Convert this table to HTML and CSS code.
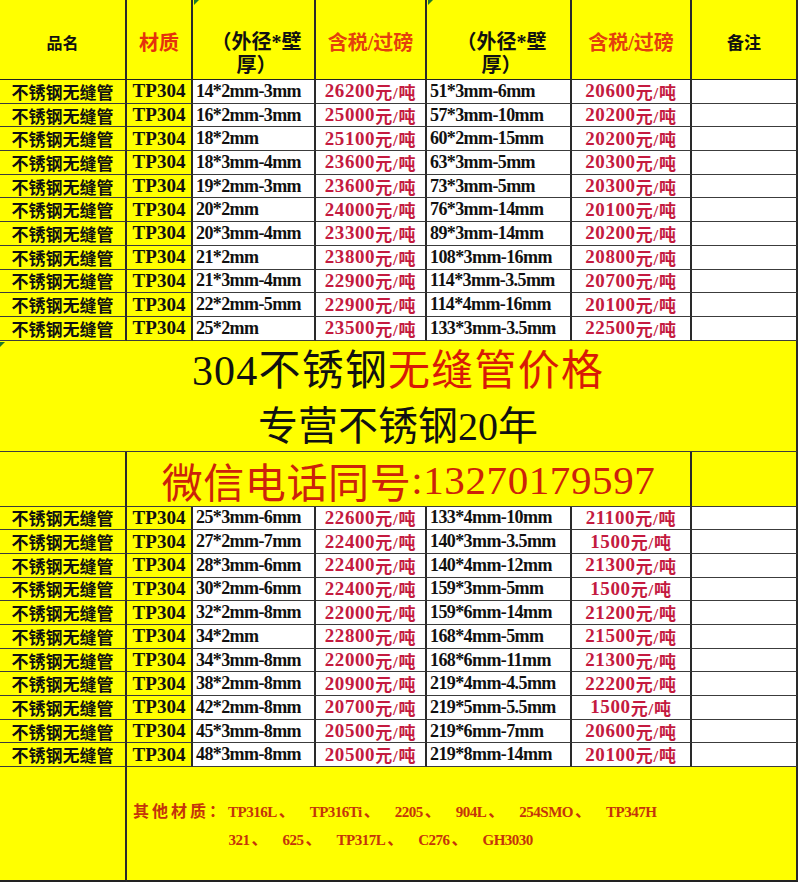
FILE: index.html
```html
<!DOCTYPE html>
<html lang="zh-CN">
<head>
<meta charset="utf-8">
<title>304不锈钢无缝管价格</title>
<link rel="stylesheet" href="styles.css">
</head>
<body>
<div class="sheet">
  <div class="c y hd"><span class="h-name">品名</span></div>
  <div class="c y hd"><span class="h-red">材质</span></div>
  <div class="c y hd wrap"><span class="h-wrap">（外径*壁<br>厚）</span></div>
  <div class="c y hd"><span class="h-orange">含税/过磅</span></div>
  <div class="c y hd wrap"><span class="h-wrap">（外径*壁<br>厚）</span></div>
  <div class="c y hd"><span class="h-orange">含税/过磅</span></div>
  <div class="c y hd"><span class="h-note">备注</span></div>

  <div class="c y name">不锈钢无缝管</div><div class="c y mat">TP304</div><div class="c spec">14*2mm-3mm</div><div class="c price">26200<span class="u">元/吨</span></div><div class="c spec">51*3mm-6mm</div><div class="c price">20600<span class="u">元/吨</span></div><div class="c"></div>
  <div class="c y name">不锈钢无缝管</div><div class="c y mat">TP304</div><div class="c spec">16*2mm-3mm</div><div class="c price">25000<span class="u">元/吨</span></div><div class="c spec">57*3mm-10mm</div><div class="c price">20200<span class="u">元/吨</span></div><div class="c"></div>
  <div class="c y name">不锈钢无缝管</div><div class="c y mat">TP304</div><div class="c spec">18*2mm</div><div class="c price">25100<span class="u">元/吨</span></div><div class="c spec">60*2mm-15mm</div><div class="c price">20200<span class="u">元/吨</span></div><div class="c"></div>
  <div class="c y name">不锈钢无缝管</div><div class="c y mat">TP304</div><div class="c spec">18*3mm-4mm</div><div class="c price">23600<span class="u">元/吨</span></div><div class="c spec">63*3mm-5mm</div><div class="c price">20300<span class="u">元/吨</span></div><div class="c"></div>
  <div class="c y name">不锈钢无缝管</div><div class="c y mat">TP304</div><div class="c spec">19*2mm-3mm</div><div class="c price">23600<span class="u">元/吨</span></div><div class="c spec">73*3mm-5mm</div><div class="c price">20300<span class="u">元/吨</span></div><div class="c"></div>
  <div class="c y name">不锈钢无缝管</div><div class="c y mat">TP304</div><div class="c spec">20*2mm</div><div class="c price">24000<span class="u">元/吨</span></div><div class="c spec">76*3mm-14mm</div><div class="c price">20100<span class="u">元/吨</span></div><div class="c"></div>
  <div class="c y name">不锈钢无缝管</div><div class="c y mat">TP304</div><div class="c spec">20*3mm-4mm</div><div class="c price">23300<span class="u">元/吨</span></div><div class="c spec">89*3mm-14mm</div><div class="c price">20200<span class="u">元/吨</span></div><div class="c"></div>
  <div class="c y name">不锈钢无缝管</div><div class="c y mat">TP304</div><div class="c spec">21*2mm</div><div class="c price">23800<span class="u">元/吨</span></div><div class="c spec">108*3mm-16mm</div><div class="c price">20800<span class="u">元/吨</span></div><div class="c"></div>
  <div class="c y name">不锈钢无缝管</div><div class="c y mat">TP304</div><div class="c spec">21*3mm-4mm</div><div class="c price">22900<span class="u">元/吨</span></div><div class="c spec">114*3mm-3.5mm</div><div class="c price">20700<span class="u">元/吨</span></div><div class="c"></div>
  <div class="c y name">不锈钢无缝管</div><div class="c y mat">TP304</div><div class="c spec">22*2mm-5mm</div><div class="c price">22900<span class="u">元/吨</span></div><div class="c spec">114*4mm-16mm</div><div class="c price">20100<span class="u">元/吨</span></div><div class="c"></div>
  <div class="c y name">不锈钢无缝管</div><div class="c y mat">TP304</div><div class="c spec">25*2mm</div><div class="c price">23500<span class="u">元/吨</span></div><div class="c spec">133*3mm-3.5mm</div><div class="c price">22500<span class="u">元/吨</span></div><div class="c"></div>

  <div class="c y banner">
    <div class="b1"><span class="num">304</span>不锈钢<span class="red">无缝管价格</span></div>
    <div class="b2">专营不锈钢<span class="num">20</span>年</div>
  </div>

  <div class="c y"></div>
  <div class="c y phone"><span>微信电话同号</span><span class="num">:13270179597</span></div>
  <div class="c y"></div>

  <div class="c y name">不锈钢无缝管</div><div class="c y mat">TP304</div><div class="c spec">25*3mm-6mm</div><div class="c price">22600<span class="u">元/吨</span></div><div class="c spec">133*4mm-10mm</div><div class="c price">21100<span class="u">元/吨</span></div><div class="c"></div>
  <div class="c y name">不锈钢无缝管</div><div class="c y mat">TP304</div><div class="c spec">27*2mm-7mm</div><div class="c price">22400<span class="u">元/吨</span></div><div class="c spec">140*3mm-3.5mm</div><div class="c price">1500<span class="u">元/吨</span></div><div class="c"></div>
  <div class="c y name">不锈钢无缝管</div><div class="c y mat">TP304</div><div class="c spec">28*3mm-6mm</div><div class="c price">22400<span class="u">元/吨</span></div><div class="c spec">140*4mm-12mm</div><div class="c price">21300<span class="u">元/吨</span></div><div class="c"></div>
  <div class="c y name">不锈钢无缝管</div><div class="c y mat">TP304</div><div class="c spec">30*2mm-6mm</div><div class="c price">22400<span class="u">元/吨</span></div><div class="c spec">159*3mm-5mm</div><div class="c price">1500<span class="u">元/吨</span></div><div class="c"></div>
  <div class="c y name">不锈钢无缝管</div><div class="c y mat">TP304</div><div class="c spec">32*2mm-8mm</div><div class="c price">22000<span class="u">元/吨</span></div><div class="c spec">159*6mm-14mm</div><div class="c price">21200<span class="u">元/吨</span></div><div class="c"></div>
  <div class="c y name">不锈钢无缝管</div><div class="c y mat">TP304</div><div class="c spec">34*2mm</div><div class="c price">22800<span class="u">元/吨</span></div><div class="c spec">168*4mm-5mm</div><div class="c price">21500<span class="u">元/吨</span></div><div class="c"></div>
  <div class="c y name">不锈钢无缝管</div><div class="c y mat">TP304</div><div class="c spec">34*3mm-8mm</div><div class="c price">22000<span class="u">元/吨</span></div><div class="c spec">168*6mm-11mm</div><div class="c price">21300<span class="u">元/吨</span></div><div class="c"></div>
  <div class="c y name">不锈钢无缝管</div><div class="c y mat">TP304</div><div class="c spec">38*2mm-8mm</div><div class="c price">20900<span class="u">元/吨</span></div><div class="c spec">219*4mm-4.5mm</div><div class="c price">22200<span class="u">元/吨</span></div><div class="c"></div>
  <div class="c y name">不锈钢无缝管</div><div class="c y mat">TP304</div><div class="c spec">42*2mm-8mm</div><div class="c price">20700<span class="u">元/吨</span></div><div class="c spec">219*5mm-5.5mm</div><div class="c price">1500<span class="u">元/吨</span></div><div class="c"></div>
  <div class="c y name">不锈钢无缝管</div><div class="c y mat">TP304</div><div class="c spec">45*3mm-8mm</div><div class="c price">20500<span class="u">元/吨</span></div><div class="c spec">219*6mm-7mm</div><div class="c price">20600<span class="u">元/吨</span></div><div class="c"></div>
  <div class="c y name">不锈钢无缝管</div><div class="c y mat">TP304</div><div class="c spec">48*3mm-8mm</div><div class="c price">20500<span class="u">元/吨</span></div><div class="c spec">219*8mm-14mm</div><div class="c price">20100<span class="u">元/吨</span></div><div class="c"></div>

  <div class="c y last"></div>
  <div class="c y last other">
    <div class="other-box">
      <div class="ol"><span class="ocn">其他材质：</span>TP316L<span class="sep">、</span>TP316Ti<span class="sep">、</span>2205<span class="sep">、</span>904L<span class="sep">、</span>254SMO<span class="sep">、</span>TP347H</div>
      <div class="ol l2">321<span class="sep">、</span>625<span class="sep">、</span>TP317L<span class="sep">、</span>C276<span class="sep">、</span>GH3030</div>
    </div>
  </div>

  <span class="mark m1"></span>
  <span class="mark m2"></span>
  <span class="mark m3"></span>
</div>
</body>
</html>
```
FILE: styles.css
```css
html, body {
  margin: 0;
  padding: 0;
  background: #ffffff;
}

.sheet {
  position: relative;
  width: 798px;
  display: grid;
  grid-template-columns: 127px 66px 123px 111px 145px 120px 106px;
  grid-template-rows: 80px repeat(11, 23.7px) 111px 55px repeat(11, 23.7px) 115px;
  font-family: "Liberation Serif", "Noto Sans CJK SC", serif;
  color: #111;
}

.c {
  box-sizing: border-box;
  border-right: 2px solid #2a2a2a;
  border-bottom: 1px solid #3c3c3c;
  background: #ffffff;
  display: flex;
  align-items: center;
  overflow: hidden;
  white-space: nowrap;
  min-width: 0;
}

.y {
  background: #ffff00;
}

/* header */
.hd {
  justify-content: center;
  padding-top: 4px;
  font-weight: 700;
  border-bottom: 1px solid #222;
}

.hd.wrap {
  align-items: flex-end;
  padding-top: 0;
  padding-bottom: 2px;
}

.h-name {
  font-size: 16px;
}

.h-note {
  font-size: 17px;
}

.h-red {
  font-size: 20px;
  color: #e5320c;
}

.h-orange {
  font-size: 20px;
  color: #e4400c;
}

.h-wrap {
  font-size: 20px;
  line-height: 23px;
  text-align: center;
  white-space: normal;
  padding-left: 6px;
}

/* data rows */
.name {
  justify-content: center;
  font-family: "Noto Sans CJK SC", sans-serif;
  font-size: 17px;
  font-weight: 700;
  line-height: 1;
}

.mat {
  justify-content: center;
  font-size: 19px;
  font-weight: 700;
}

.spec {
  padding-left: 3px;
  font-size: 18px;
  letter-spacing: -0.6px;
  font-weight: 700;
}

.price {
  justify-content: center;
  font-size: 19px;
  letter-spacing: 0.6px;
  font-weight: 700;
  color: #c41a40;
}

.u {
  font-size: 17px;
  font-weight: 700;
  letter-spacing: 0.8px;
}

/* banner */
.banner {
  grid-column: 1 / -1;
  flex-direction: column;
  justify-content: center;
  padding-top: 6px;
  color: #111;
}

.b1 {
  font-size: 42px;
  line-height: 55px;
  letter-spacing: 1.2px;
}

.b2 {
  font-size: 40px;
  line-height: 55px;
}

.red {
  color: #d81a06;
}

.num {
  font-family: "Liberation Serif", serif;
}

/* phone */
.phone {
  grid-column: 2 / 7;
  justify-content: center;
  padding-top: 2px;
  font-size: 41px;
  letter-spacing: 0.6px;
  color: #cc220a;
}

/* bottom */
.last {
  border-bottom: 2px solid #222;
}

.other {
  grid-column: 2 / -1;
  align-items: center;
  padding-left: 6px;
  font-weight: 700;
  font-size: 15px;
  color: #c4340a;
}

.other-box {
  display: flex;
  flex-direction: column;
  align-items: center;
  padding-top: 2px;
}

.ol {
  line-height: 26px;
  letter-spacing: -0.5px;
}

.l2 {
  margin-right: 28px;
}

.ocn {
  font-size: 16px;
  letter-spacing: 3px;
}

.sep {
  display: inline-block;
  width: 33px;
  font-family: "Noto Sans CJK SC", sans-serif;
  font-size: 16px;
  text-align: left;
  padding-left: 2px;
  box-sizing: border-box;
}

/* Excel error indicators */
.mark {
  position: absolute;
  width: 0;
  height: 0;
  border-top: 5px solid #1f7a2a;
  border-right: 5px solid transparent;
}

.m1 { left: 194px; top: 0; }
.m2 { left: 428px; top: 0; }
.m3 { left: 0; top: 342px; }
```
